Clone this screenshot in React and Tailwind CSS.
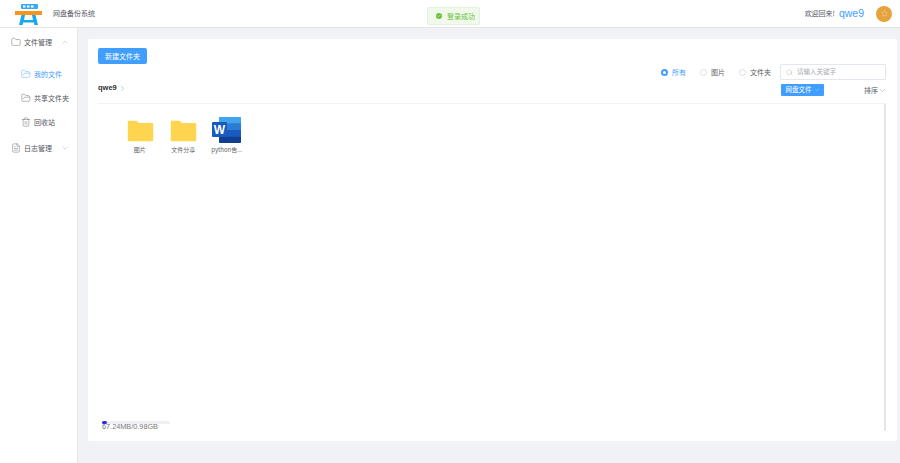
import { ChevronDown, ChevronRight, ChevronUp, Folder, FolderOpen, Trash2, FileText, Search, Check, Star } from 'lucide-react';

const FONT = 'font-["Noto_Sans_CJK_SC","Noto_Sans",sans-serif]';

const Logo = () => (
  <svg width="27" height="24" viewBox="0 0 27 24" className="shrink-0">
    <rect x="6" y="2" width="17" height="5" rx="1" fill="#39a9f4" />
    <rect x="8" y="3.500" width="2.500" height="2" fill="#fff" />
    <rect x="12" y="3.500" width="2.500" height="2" fill="#fff" />
    <rect x="16" y="3.500" width="2.500" height="2" fill="#fff" />
    <rect x="0" y="9" width="27" height="4" fill="#f7941d" />
    <path d="M4 23 L6.500 13 H10 L9 18 H18 L17 13 H20.500 L23 23 H19.500 L18.800 20.500 H8.200 L7.500 23 Z" fill="#16a8f2" />
  </svg>
);

const FolderIcon = () => (
  <svg width="26" height="21" viewBox="0 0 27 22" className="translate-x-[0.5px] translate-y-[0.5px]">
    <path d="M0 1.500 Q0 0 1.500 0 H9 L12 2.500 H25.500 Q27 2.500 27 4 V20.500 Q27 22 25.500 22 H1.500 Q0 22 0 20.500 Z" fill="#ffd54f" />
  </svg>
);

const WordIcon = () => (
  <svg width="30" height="26" viewBox="0 0 30 26">
    <rect x="7" y="0" width="22" height="26" rx="1.500" fill="#2b7cd3" />
    <rect x="7" y="0" width="22" height="6.500" rx="1" fill="#41a5ee" />
    <rect x="18" y="6.500" width="11" height="6.500" fill="#2b7cd3" />
    <rect x="7" y="13" width="22" height="6.500" fill="#185abd" />
    <path d="M7 19.500 H29 V24.500 Q29 26 27.500 26 H8.500 Q7 26 7 24.500 Z" fill="#103f91" />
    <rect x="0" y="5" width="15" height="15" rx="1" fill="#185abd" />
    <text x="7.500" y="16.500" textAnchor="middle" fontSize="12" fontWeight="700" fill="#fff" fontFamily="Liberation Sans, sans-serif">W</text>
  </svg>
);

const NavItem = ({ icon: Icon, label, active }) => (
  <div className={`flex items-center gap-[3px] h-[24px] pl-[21px] text-[7px] ${active ? 'text-[#409eff]' : 'text-[#55585e]'}`}>
    <Icon size={10} strokeWidth={1} />
    <span>{label}</span>
  </div>
);

const NavGroup = ({ icon: Icon, label, chevron: Chevron }) => (
  <div className="flex items-center h-[28px] pl-[11px] pr-[8px] text-[7px] text-[#55585e]">
    <Icon size={10} strokeWidth={1} />
    <span className="ml-[3px]">{label}</span>
    <Chevron size={8} strokeWidth={1} className="ml-auto text-[#909399]" />
  </div>
);

const Radio = ({ label, checked }) => (
  <div className={`flex items-center gap-[4px] text-[7px] ${checked ? 'text-[#409eff]' : 'text-[#606266]'}`}>
    {checked ? (
      <span className="flex items-center justify-center w-[7px] h-[7px] rounded-full bg-[#409eff]">
        <span className="w-[3px] h-[3px] rounded-full bg-white" />
      </span>
    ) : (
      <span className="w-[7px] h-[7px] rounded-full border border-[#dcdfe6] bg-white" />
    )}
    <span>{label}</span>
  </div>
);

const FileCell = ({ icon, label }) => (
  <div className="flex flex-col items-center w-[43.500px]">
    <div className="flex items-center justify-center h-[26px]">{icon}</div>
    <span className="mt-[2px] text-[6px] leading-[10px] text-[#606266] whitespace-nowrap">{label}</span>
  </div>
);

export default function App() {
  return (
    <div className={`relative flex flex-col w-[900px] h-[463px] overflow-hidden bg-[#f0f2f5] ${FONT}`}>
      {/* Header */}
      <header className="flex items-center justify-between h-[28px] shrink-0 pl-[15px] pr-[8px] bg-white border-b border-[#e6e6e6]">
        <div className="flex items-center gap-[11px]">
          <Logo />
          <span className="text-[7px] text-[#55585e]">网盘备份系统</span>
        </div>
        <div className="flex items-center">
          <span className="text-[7px] text-[#55585e]">欢迎回来!</span>
          <span className="ml-[4px] text-[10.500px] text-[#409eff] font-['Liberation_Sans',sans-serif]">qwe9</span>
          <span className="ml-[12px] flex items-center justify-center w-[16px] h-[16px] rounded-full bg-[#e6a23c]">
            <Star size={7} strokeWidth={1} className="text-white" />
          </span>
        </div>
      </header>

      {/* Toast */}
      <div className="absolute left-[427px] top-[7px] flex items-center gap-[5px] w-[53px] h-[18px] pl-[8px] rounded-[2px] bg-[#f0f9eb] border border-[#e1f3d8] text-[7px] text-[#67c23a]">
        <span className="flex items-center justify-center w-[6px] h-[6px] rounded-full bg-[#67c23a]">
          <Check size={4} strokeWidth={3} className="text-white" />
        </span>
        <span>登录成功</span>
      </div>

      <div className="flex flex-1 min-h-0">
        {/* Sidebar */}
        <aside className="w-[78px] shrink-0 bg-white border-r border-[#e6e6e6]">
          <NavGroup icon={Folder} label="文件管理" chevron={ChevronUp} />
          <div className="pt-[6px]">
            <NavItem icon={FolderOpen} label="我的文件" active />
            <NavItem icon={FolderOpen} label="共享文件夹" />
            <NavItem icon={Trash2} label="回收站" />
          </div>
          <NavGroup icon={FileText} label="日志管理" chevron={ChevronDown} />
        </aside>

        {/* Main */}
        <main className="flex-1 min-w-0 pt-[11px] pl-[10px] pr-[3px] pb-[22px]">
          <div className="flex flex-col h-full pt-[9px] pl-[10px] pr-[11px] pb-[10px] bg-white rounded-[2px]">
            <div className="flex items-start justify-between">
              <button className="w-[49px] h-[16px] rounded-[2px] bg-[#409eff] text-[7px] text-white">新建文件夹</button>
              <div className="flex items-center gap-[14px] mt-[16px]">
                <Radio label="所有" checked />
                <Radio label="图片" />
                <Radio label="文件夹" />
                <div className="flex items-center gap-[4px] w-[106px] h-[16px] ml-[-5px] pl-[5px] border border-[#e4e7ed] rounded-[1px] text-[6.500px] text-[#a8abb2]">
                  <Search size={7} strokeWidth={1} className="text-[#909399]" />
                  <span>请输入关键字</span>
                </div>
              </div>
            </div>

            <div className="flex items-center justify-between h-[25px] mt-[-1px] border-b border-[#f2f2f2] pb-[6px]">
              <div className="flex items-center gap-[1px]">
                <span className="text-[7.500px] font-bold text-[#303133] font-['Liberation_Sans',sans-serif]">qwe9</span>
                <ChevronRight size={9} strokeWidth={1.2} className="text-[#909399]" />
              </div>
              <div className="flex items-center mt-[4px]">
                <button className="flex items-center justify-center gap-[2px] w-[43px] h-[12px] rounded-[1px] bg-[#409eff] text-[6.500px] text-white">
                  网盘文件
                  <ChevronDown size={6} strokeWidth={1} />
                </button>
                <span className="ml-[40px] text-[7px] text-[#606266]">排序</span>
                <ChevronDown size={9} strokeWidth={1.2} className="mr-[-1px] text-[#909399]" />
              </div>
            </div>

            <div className="relative flex flex-col flex-1 min-h-0">
              {/* right edge scrollbar */}
              <div className="absolute right-[0px] top-0 bottom-0 w-[2px] bg-[#e5e5e5]" />
              <div className="flex pt-[13px] pl-[20px]">
                <FileCell icon={<FolderIcon />} label="图片" />
                <FileCell icon={<FolderIcon />} label="文件分享" />
                <FileCell icon={<WordIcon />} label="python告..." />
              </div>
              <div className="mt-auto pl-[4px]">
                <div className="w-[68px] h-[3px] rounded-full bg-[#eef0f4]">
                  <div className="w-[5px] h-full rounded-full bg-[#2b2bf0]" />
                </div>
                <div className="mt-[-1px] text-[7.300px] leading-[8px] text-[#777] font-['Liberation_Sans',sans-serif]">67.24MB/0.98GB</div>
              </div>
            </div>
          </div>
        </main>
      </div>
    </div>
  );
}
